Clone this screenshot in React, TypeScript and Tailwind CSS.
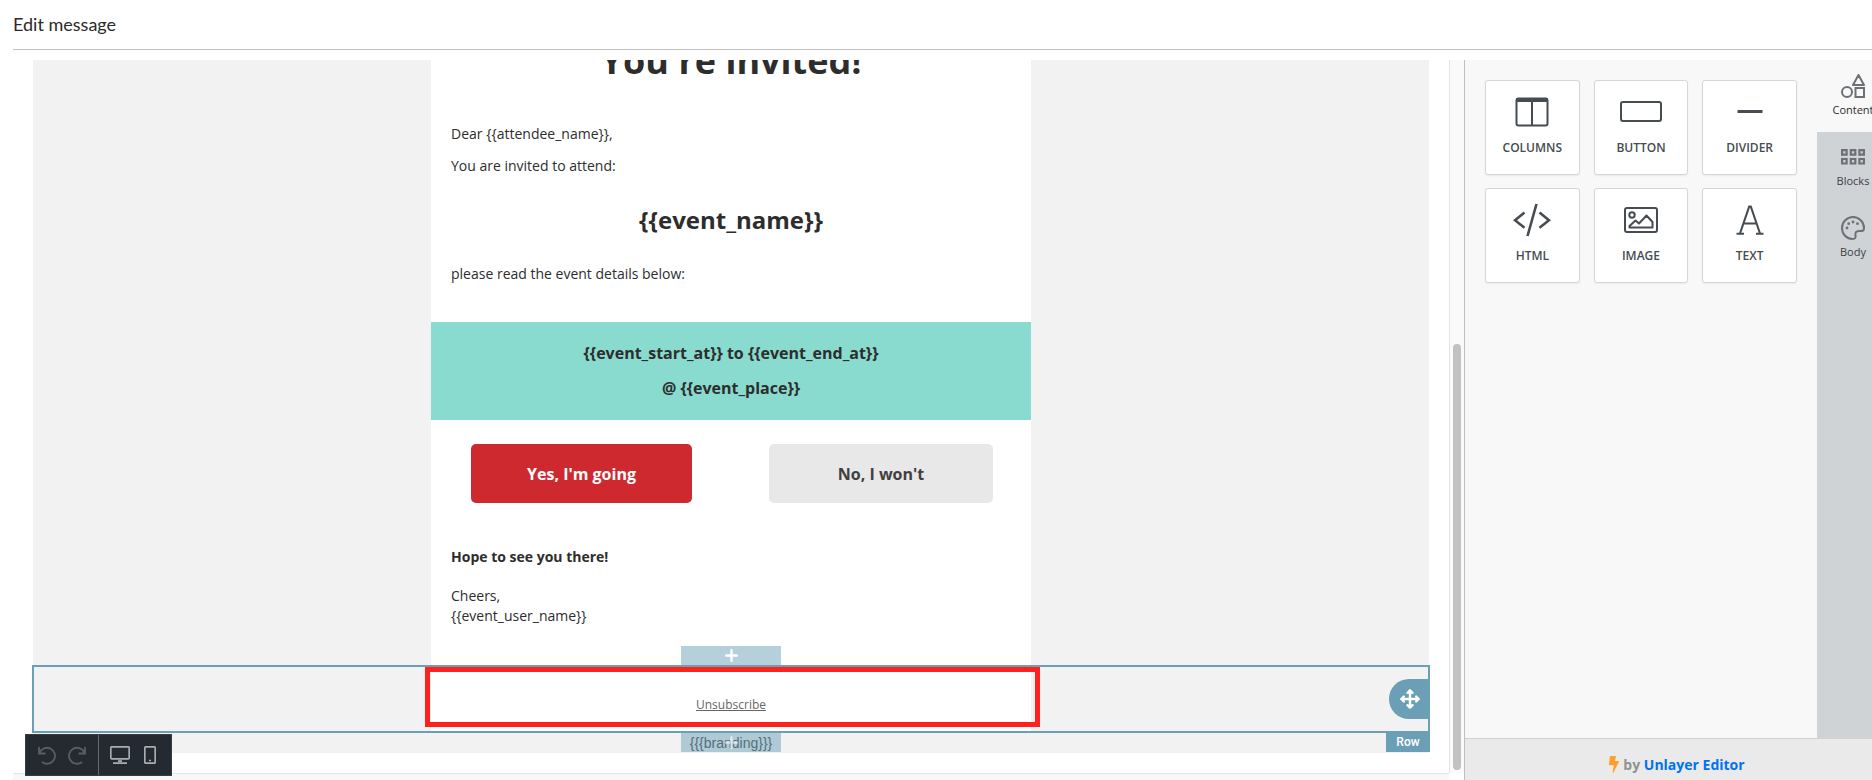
import React from "react";

const tools = [
  {
    name: "COLUMNS",
    icon: (
      <svg width="34" height="30" viewBox="0 0 34 30" fill="none" stroke="currentColor" strokeWidth="2">
        <rect x="1.5" y="1.5" width="31" height="27" rx="2" />
        <path d="M1.500 3h31" strokeWidth="4" />
        <path d="M17 3v25" />
      </svg>
    ),
  },
  {
    name: "BUTTON",
    icon: (
      <svg width="42" height="22" viewBox="0 0 42 22" fill="none" stroke="currentColor" strokeWidth="2">
        <rect x="1" y="1" width="40" height="19" rx="2" />
      </svg>
    ),
  },
  {
    name: "DIVIDER",
    icon: (
      <svg width="26" height="4" viewBox="0 0 26 4" fill="currentColor">
        <rect x="0.5" y="0" width="25" height="3" />
      </svg>
    ),
  },
  {
    name: "HTML",
    icon: (
      <svg width="38" height="34" viewBox="0 0 38 34" fill="none" stroke="currentColor" strokeWidth="2.600">
        <path d="M11.5 9.5 2 17.2l9.5 7.5M26.500 9.500 36 17.200l-9.500 7.500M23.500 1 14.500 33" />
      </svg>
    ),
  },
  {
    name: "IMAGE",
    icon: (
      <svg width="34" height="26" viewBox="0 0 34 26" fill="none" stroke="currentColor" strokeWidth="2">
        <rect x="1" y="1" width="32" height="24" rx="2" />
        <circle cx="8" cy="8" r="2.700" />
        <path d="M5.500 20.500v-1.500l6-5.500 3.500 3 7.500-8 6 6.500v5.500z" strokeLinejoin="round" />
      </svg>
    ),
  },
  {
    name: "TEXT",
    icon: (
      <svg width="28" height="30" viewBox="0 0 28 30" fill="none" stroke="currentColor" strokeWidth="2.100">
        <path d="M4 28.500 13.200 1.500h1.600L24 28.500M7.500 18.500h13M0.500 28.800h7.500M20 28.800h7.500" />
      </svg>
    ),
  },
];

const tabs = [
  {
    name: "Content",
    icon: (
      <svg width="24" height="24" viewBox="0 0 24 24" fill="none" stroke="currentColor" strokeWidth="2" strokeLinejoin="round">
        <path d="M17.500 1 12 11h11z" />
        <circle cx="6" cy="18" r="5" />
        <path d="M14.500 14H23v9h-8.500z" strokeLinejoin="miter" />
      </svg>
    ),
  },
  {
    name: "Blocks",
    icon: (
      <svg width="24" height="16" viewBox="0 0 24 16" fill="none" stroke="currentColor" strokeWidth="2.200">
        <path d="M1.100 1.100h4.500v4.500H1.100zM9.800 1.100h4.500v4.500H9.800zM18.400 1.100h4.500v4.500h-4.500zM1.100 10h4.500v4.500H1.100zM9.800 10h4.500v4.500H9.800zM18.400 10h4.500v4.500h-4.500z" />
      </svg>
    ),
  },
  {
    name: "Body",
    icon: (
      <svg width="24" height="24" viewBox="0 0 24 24" fill="none" stroke="currentColor" strokeWidth="2">
        <path d="M12 1C5.900 1 1 5.900 1 12s4.500 11 10.500 11c3 0 3.300-1.500 3-3.500-.5-3 .5-4.500 3.500-4.500h2.500c1.500 0 2.500-1 2.500-3C23 5.900 18 1 12 1z" />
        <g fill="currentColor" stroke="none">
          <circle cx="6" cy="12" r="1.400" />
          <circle cx="7.700" cy="7.700" r="1.400" />
          <circle cx="12" cy="6" r="1.400" />
          <circle cx="16.500" cy="7.700" r="1.400" />
        </g>
      </svg>
    ),
  },
];

function Plus() {
  return (
    <svg width="13" height="13" viewBox="0 0 13 13" stroke="currentColor" strokeWidth="2.400" strokeLinecap="round">
      <path d="M6.500 1.200v10.600M1.200 6.500h10.600" />
    </svg>
  );
}

function Toolbar() {
  const button = "flex w-[30px] items-center justify-center";
  return (
    <div className="absolute bottom-1 left-3 flex h-[42px] border border-[#3a3d40] bg-[#242a31]">
      <div className="flex border-r border-[#6a6b6c] px-[6px] text-[#5b5d5e]">
        <button aria-label="Undo" className={button}>
          <svg width="18" height="19" viewBox="0 0 18 19" fill="none" stroke="currentColor" strokeWidth="1.800">
            <path d="M1 1v6.500h6.500M1.500 7A8 8 0 1 1 4 16" />
          </svg>
        </button>
        <button aria-label="Redo" className={button}>
          <svg width="18" height="19" viewBox="0 0 18 19" fill="none" stroke="currentColor" strokeWidth="1.800">
            <path d="M17 1v6.500h-6.500M16.500 7A8 8 0 1 0 14 16" />
          </svg>
        </button>
      </div>
      <div className="flex px-[6px] text-[#a9adb1]">
        <button aria-label="Desktop view" className={button}>
          <svg width="20" height="18" viewBox="0 0 20 18" fill="none" stroke="currentColor" strokeWidth="1.700">
            <rect x="0.800" y="0.800" width="18.400" height="12" rx="1" />
            <path d="M3 17.100h14M8 15.200h4" />
          </svg>
        </button>
        <button aria-label="Mobile view" className={button}>
          <svg width="12" height="18" viewBox="0 0 12 18" fill="none" stroke="currentColor" strokeWidth="1.700">
            <rect x="0.800" y="0.800" width="10.400" height="16.400" rx="1" />
            <path d="M5 14.500h2" />
          </svg>
        </button>
      </div>
    </div>
  );
}

function Email() {
  return (
    <div className="mx-auto flex h-[605px] w-[600px] flex-col bg-white px-5 text-sm text-[#2d2d2d]">
      <h1 className="-mt-6 text-center text-4xl leading-[50px] font-bold">You're invited!</h1>
      <p className="mt-[36px] leading-6">Dear {"{{attendee_name}}"},</p>
      <p className="mt-2 leading-6">You are invited to attend:</p>
      <h2 className="mt-6 text-center text-2xl leading-9 font-bold">{"{{event_name}}"}</h2>
      <p className="mt-6 leading-6">please read the event details below:</p>
      <div className="-mx-5 mt-[36px] h-[98px] bg-[#89dbcf] pt-[14px] text-center text-base leading-[35px] font-bold">
        <p>{"{{event_start_at}} to {{event_end_at}}"}</p>
        <p>@ {"{{event_place}}"}</p>
      </div>
      <div className="mt-6 flex justify-between pr-[18px] pl-5 text-base font-bold">
        <button className="h-[59px] w-[221px] rounded-[5px] bg-[#cf2930] text-white">Yes, I'm going</button>
        <button className="h-[59px] w-[224px] rounded-[5px] bg-[#e8e8e8] text-[#404040]">No, I won't</button>
      </div>
      <p className="mt-[42px] leading-6 font-bold">Hope to see you there!</p>
      <p className="mt-[17px] leading-5">
        Cheers,
        <br />
        {"{{event_user_name}}"}
      </p>
    </div>
  );
}

export default function App() {
  return (
    <div className="flex h-screen flex-col overflow-hidden bg-white pl-[13px] font-['Open_Sans',sans-serif]">
      <header className="h-[50px] shrink-0 border-b border-[#c2c2c2] pt-3">
        <h1 className="font-['Lato',sans-serif] text-lg leading-6 text-[#2a2a2a]">Edit message</h1>
      </header>
      <div className="mt-[10px] flex min-h-0 flex-1">
        <main className="relative flex min-w-0 flex-1 flex-col">
          <div className="min-h-0 flex-1 overflow-hidden border-b border-[#e4e4e4] pr-5 pl-5">
            <div className="bg-[#f2f2f2]">
              <Email />
              <section className="relative -mx-px h-[68px] border-2 border-[#6a9fb5]">
                <button aria-label="Add row above" className="absolute -top-[21px] left-1/2 flex h-[19px] w-[100px] -translate-x-1/2 items-center justify-center bg-[#b5cfdb] text-white">
                  <Plus />
                </button>
                <div className="relative mx-auto h-full w-[600px] bg-white pt-6 text-center">
                  <a href="#unsubscribe" className="text-xs leading-5 text-[#666] underline">Unsubscribe</a>
                  <div className="absolute top-0 -right-[9px] -left-[6px] h-[60px] border-[5px] border-[#ff221c]" />
                </div>
                <button aria-label="Move row" className="absolute top-3 -right-0.5 flex h-10 w-[41px] items-center justify-center rounded-l-full bg-[#6a9fb5] text-white">
                  <svg width="20" height="20" viewBox="0 0 20 20" fill="none" stroke="currentColor" strokeWidth="2.400" strokeLinecap="round" strokeLinejoin="round">
                    <path d="M10 1.500v17M1.500 10h17M7.500 3.800 10 1.300l2.500 2.500M7.500 16.200l2.500 2.500 2.500-2.500M3.800 7.500 1.300 10l2.500 2.500M16.200 7.500l2.500 2.500-2.500 2.500" />
                  </svg>
                </button>
                <span className="absolute top-[64px] -right-0.5 flex h-[21px] w-[44px] items-center justify-center bg-[#6a9fb5] font-['Roboto',sans-serif] text-xs font-medium text-white">Row</span>
              </section>
              <div className="flex h-5 justify-center">
                <div className="relative flex h-[19px] w-[100px] items-center justify-center bg-[#afc9d5] font-['Liberation_Sans',sans-serif] text-sm text-[#52707c]">
                  {"{{{branding}}}"}
                  <button aria-label="Add row below" className="absolute inset-0 flex items-center justify-center text-white/60">
                    <Plus />
                  </button>
                </div>
              </div>
            </div>
          </div>
          <div className="h-[6px] shrink-0 bg-[#f8f8f8]" />
          <Toolbar />
        </main>
        <div className="mb-[7px] w-[15px] shrink-0 border-l border-[#e4e4e4] bg-[#fafafa] pt-[284px] pl-[3px]">
          <div className="h-[426px] w-2 rounded-full bg-[#c1c1c1]" />
        </div>
        <aside className="-mr-[17px] flex w-[425px] shrink-0 flex-col border-l border-[#bfc0c1] bg-[#f8f8f8]">
          <div className="flex min-h-0 flex-1">
            <div className="grid flex-1 grid-cols-3 content-start gap-x-[14px] gap-y-[13px] p-5">
              {tools.map((tool) => (
                <button key={tool.name} className="flex h-[95px] flex-col items-center rounded-[3px] border border-[#d5d6d7] bg-white pt-[13px] text-xs font-semibold text-[#464c51] shadow-[0_1px_2px_rgba(0,0,0,0.06)]">
                  <span className="flex h-9 items-center">{tool.icon}</span>
                  <span className="mt-[10px] leading-4">{tool.name}</span>
                </button>
              ))}
            </div>
            <nav className="flex w-[72px] flex-col bg-[#cfd3d6] text-[11px] text-[#3c4146]">
              {tabs.map((tab, i) => (
                <button key={tab.name} className={"flex flex-col items-center " + (i === 0 ? "h-[72px] bg-[#f8f8f8] pt-[14px] text-[#2a2d30]" : "h-[71px] pt-[13px]")}>
                  <span className="flex h-6 items-center text-[#6d7074]">{tab.icon}</span>
                  <span className="mt-1 leading-4">{tab.name}</span>
                </button>
              ))}
            </nav>
          </div>
          <footer className="flex h-[42px] shrink-0 items-center justify-center border-t border-[#cfd0d2] bg-[#eaeaea] pt-[10px] text-sm font-bold text-[#929292]">
            <svg width="10" height="17" viewBox="0 0 10 17" className="mr-1" fill="#ff9f30">
              <path d="M1.500 0h5.500L6 5h3.500c.5 0 .6.500.4.900L4.500 16.500c-.3.600-1 .4-.9-.2L4.700 9.200H.7C.2 9.200 0 8.800 0 8.400L.8.600C.9.200 1.100 0 1.500 0z" />
            </svg>
            by&nbsp;<a href="#unlayer" className="text-[#0071f2]">Unlayer Editor</a>
          </footer>
        </aside>
      </div>
    </div>
  );
}
